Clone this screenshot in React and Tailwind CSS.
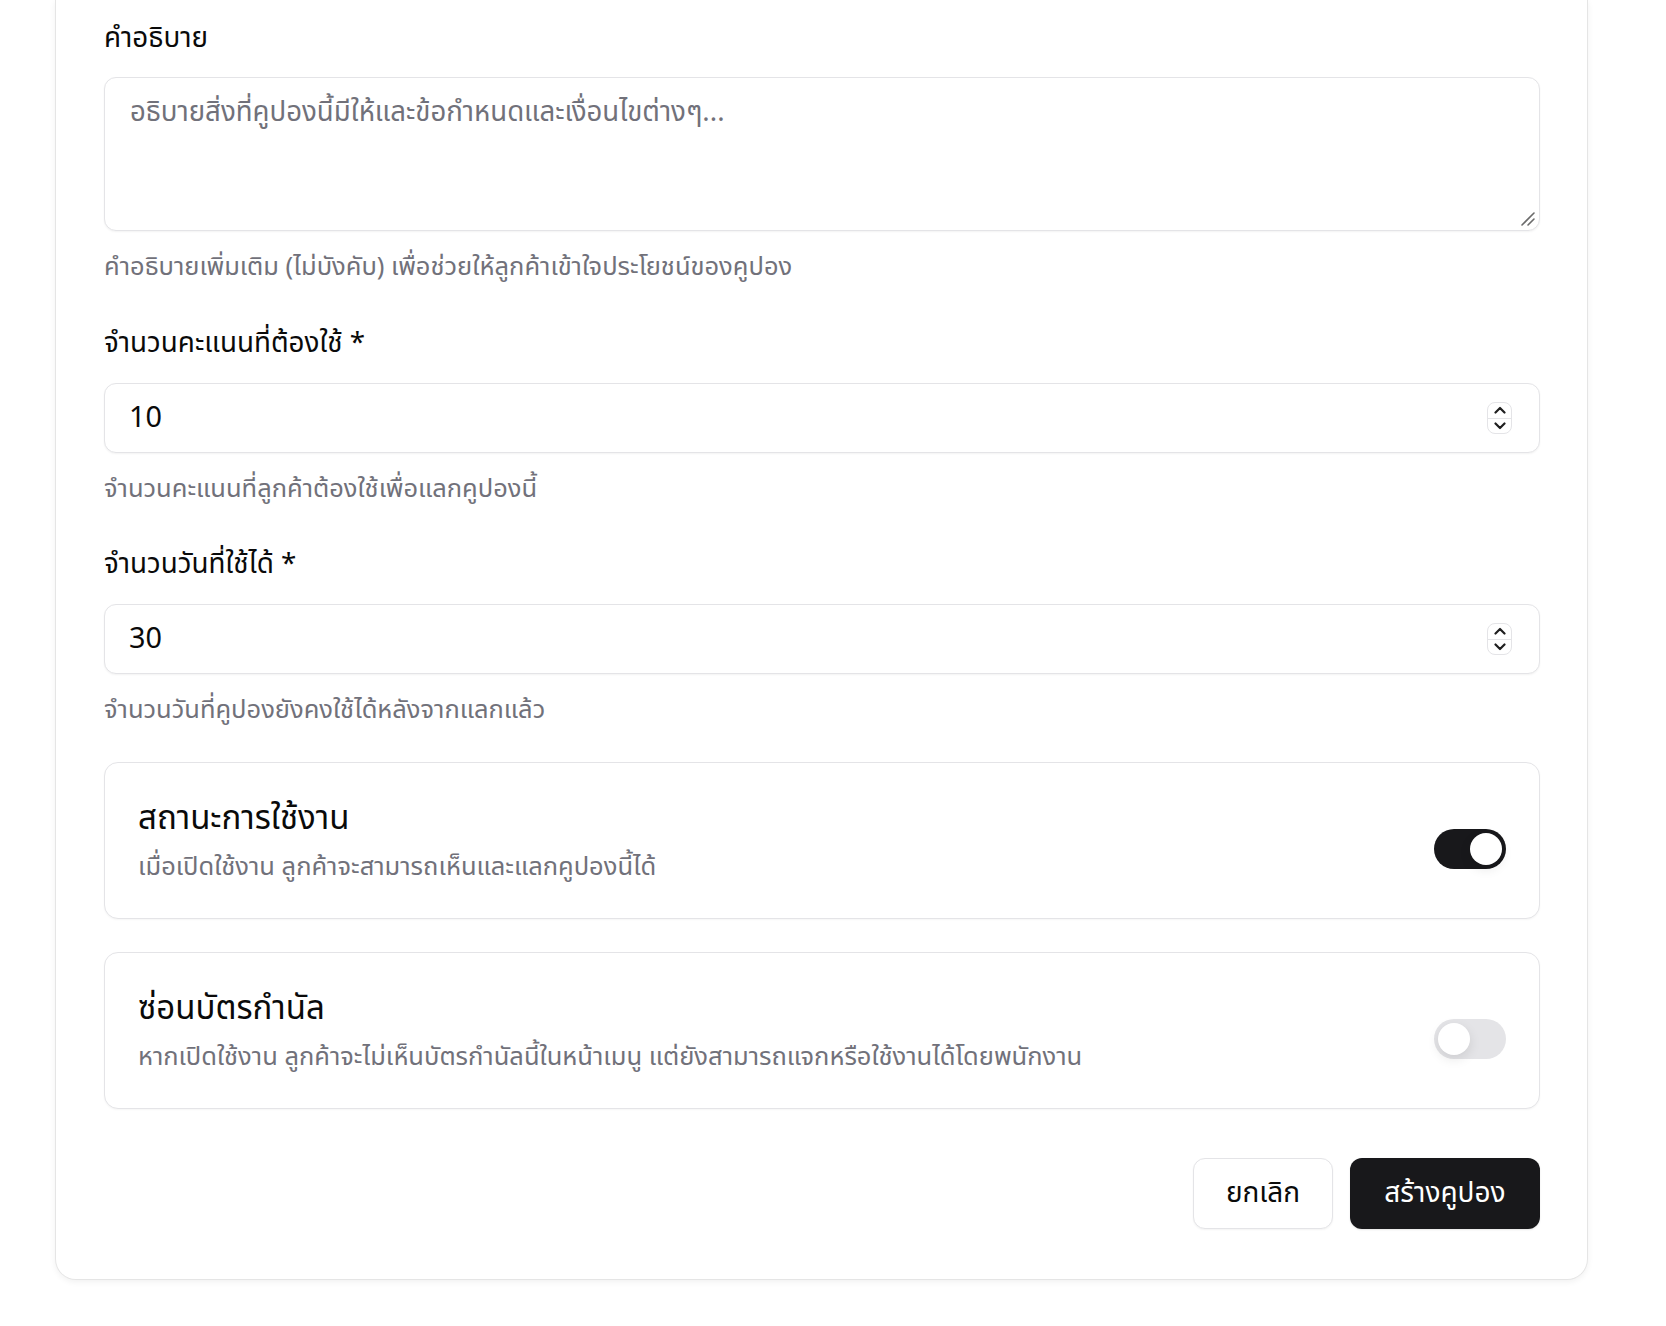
import React from "react";

function Spinner() {
  return (
    <div className="absolute right-[28px] top-[19px] w-[25px] h-[32px] rounded-[8px] border border-[#e4e4e7] bg-white flex flex-col overflow-hidden">
      <div className="flex-1 flex items-center justify-center border-b border-[#e4e4e7]">
        <svg width="12" height="8" viewBox="0 0 12 8" fill="none">
          <path d="M1.5 6.5 L6 2 L10.5 6.5" stroke="#1f1f1f" strokeWidth="2.2" strokeLinecap="round" strokeLinejoin="round" />
        </svg>
      </div>
      <div className="flex-1 flex items-center justify-center">
        <svg width="12" height="8" viewBox="0 0 12 8" fill="none">
          <path d="M1.5 1.5 L6 6 L10.5 1.5" stroke="#1f1f1f" strokeWidth="2.2" strokeLinecap="round" strokeLinejoin="round" />
        </svg>
      </div>
    </div>
  );
}

function NumberField({ value }) {
  return (
    <div className="relative mt-[23px] h-[70px]">
      <input
        type="text"
        readOnly
        value={value}
        className="w-full h-full rounded-[12px] border border-[#e4e4e7] bg-white pl-[24px] pr-[60px] pb-[5px] text-[28.8px] text-[#0a0a0a] shadow-[0_1px_2px_rgba(0,0,0,0.05)] outline-none"
      />
      <Spinner />
    </div>
  );
}

function Label({ children, className = "" }) {
  return (
    <div className={"h-[35px] leading-[33px] text-[27.8px] text-[#0a0a0a] " + className}>
      {children}
    </div>
  );
}

function Caption({ children }) {
  return <div className="mt-[17px] h-[35px] leading-[34px] text-[25.5px] text-[#71717a]">{children}</div>;
}

function Switch({ on }) {
  return (
    <div
      className={
        "mt-[17px] w-[72px] h-[40px] rounded-full p-[4px] flex items-center " +
        (on ? "bg-[#18181b] justify-end" : "bg-[#e4e4e7] justify-start")
      }
    >
      <div className="w-[32px] h-[32px] rounded-full bg-white shadow-[0_4px_12px_rgba(0,0,0,0.10)]" />
    </div>
  );
}

function ToggleCard({ title, desc, on, className = "" }) {
  return (
    <div
      className={
        "h-[157px] rounded-[14px] border border-[#e4e4e7] bg-white px-[33px] flex items-center justify-between shadow-[0_1px_2px_rgba(0,0,0,0.04)] " +
        className
      }
    >
      <div className="flex flex-col gap-[8px]">
        <div className="h-[42px] leading-[38px] text-[33px] text-[#0a0a0a]">{title}</div>
        <div className="h-[35px] leading-[35px] text-[25.5px] text-[#71717a]">{desc}</div>
      </div>
      <Switch on={on} />
    </div>
  );
}

export default function App() {
  return (
    <div className="min-h-screen bg-white [font-family:'Noto_Sans','Noto_Sans_Thai',sans-serif]">
      <div className="ml-[55px] w-[1533px] rounded-b-[21px] border border-t-0 border-[#e5e5e5] bg-white shadow-[0_2px_6px_rgba(0,0,0,0.06)] pt-[20px] pb-[50px] pl-[48px] pr-[47px]">
        <Label>คำอธิบาย</Label>
        <div className="relative mt-[22px] h-[154px]">
          <textarea
            readOnly
            placeholder="อธิบายสิ่งที่คูปองนี้มีให้และข้อกำหนดและเงื่อนไขต่างๆ..."
            className="w-full h-full resize-none rounded-[12px] border border-[#e4e4e7] bg-white px-[25px] pt-[15px] text-[27.6px] leading-[35px] text-[#0a0a0a] placeholder:text-[#71717a] shadow-[0_1px_2px_rgba(0,0,0,0.05)] outline-none"
          />
          <svg className="absolute right-[4px] bottom-[4px]" width="16" height="16" viewBox="0 0 16 16" fill="none">
            <path d="M2 14 L14 2" stroke="#6b6b6b" strokeWidth="1.6" strokeLinecap="round" />
            <path d="M8 14 L14 8" stroke="#6b6b6b" strokeWidth="1.6" strokeLinecap="round" />
          </svg>
        </div>
        <Caption>คำอธิบายเพิ่มเติม (ไม่บังคับ) เพื่อช่วยให้ลูกค้าเข้าใจประโยชน์ของคูปอง</Caption>

        <Label className="mt-[42px]">จำนวนคะแนนที่ต้องใช้ *</Label>
        <NumberField value="10" />
        <Caption>จำนวนคะแนนที่ลูกค้าต้องใช้เพื่อแลกคูปองนี้</Caption>

        <Label className="mt-[41px]">จำนวนวันที่ใช้ได้ *</Label>
        <NumberField value="30" />
        <Caption>จำนวนวันที่คูปองยังคงใช้ได้หลังจากแลกแล้ว</Caption>

        <ToggleCard
          className="mt-[36px]"
          title="สถานะการใช้งาน"
          desc="เมื่อเปิดใช้งาน ลูกค้าจะสามารถเห็นและแลกคูปองนี้ได้"
          on
        />
        <ToggleCard
          className="mt-[33px]"
          title="ซ่อนบัตรกำนัล"
          desc="หากเปิดใช้งาน ลูกค้าจะไม่เห็นบัตรกำนัลนี้ในหน้าเมนู แต่ยังสามารถแจกหรือใช้งานได้โดยพนักงาน"
          on={false}
        />

        <div className="mt-[49px] flex justify-end gap-[17px]">
          <button className="w-[140px] h-[71px] pb-[5px] rounded-[12px] border border-[#e4e4e7] bg-white text-[28px] text-[#0a0a0a] shadow-[0_1px_2px_rgba(0,0,0,0.05)]">
            ยกเลิก
          </button>
          <button className="w-[190px] h-[71px] pb-[5px] rounded-[12px] bg-[#18181b] text-[28px] text-white shadow-[0_1px_2px_rgba(0,0,0,0.1)]">
            สร้างคูปอง
          </button>
        </div>
      </div>
    </div>
  );
}
